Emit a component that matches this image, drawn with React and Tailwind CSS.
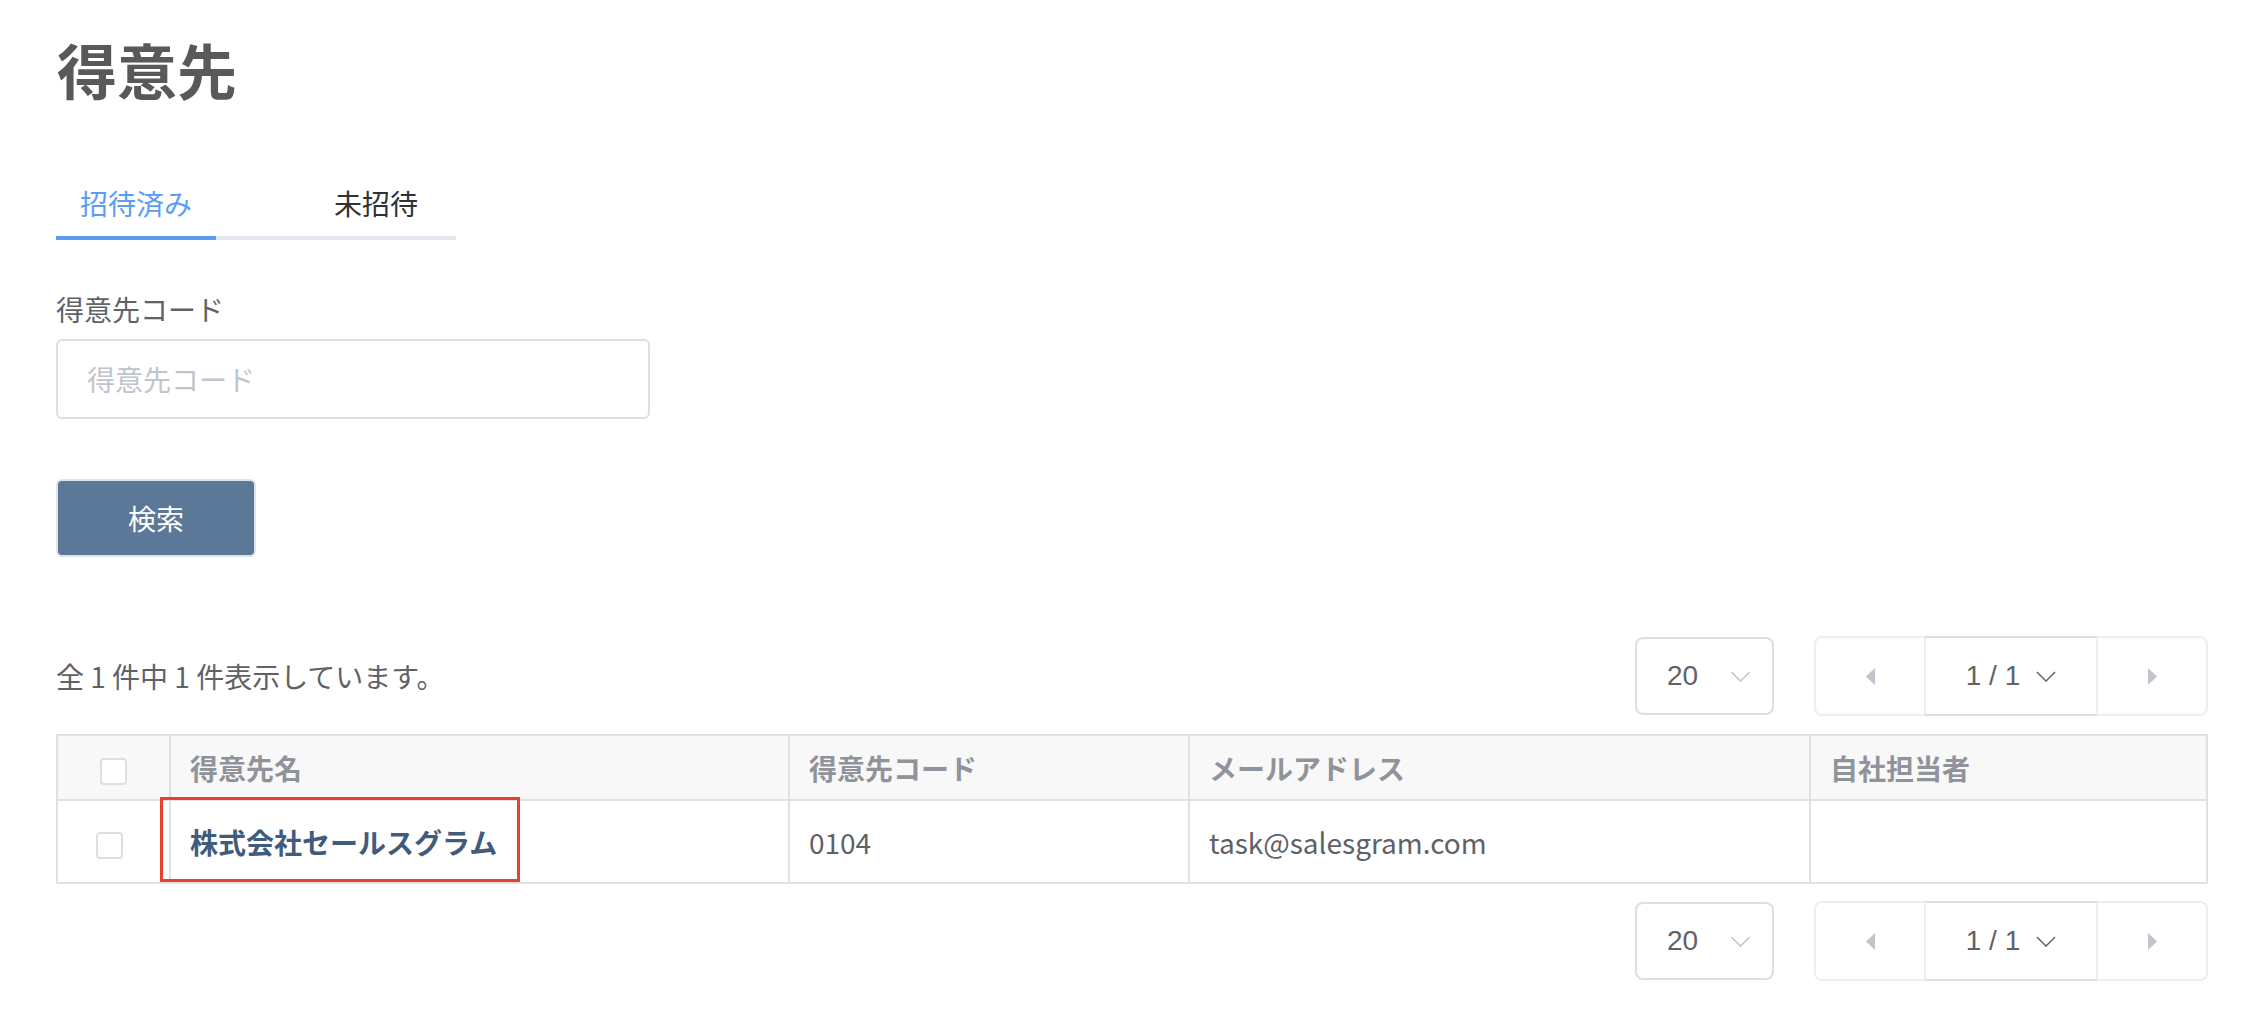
import { useState } from "react";

const jp = { fontFamily: '"Noto Sans CJK JP", "Noto Sans", sans-serif' };

const Chevron = ({ className }) => (
  <svg viewBox="0 0 22 12" className={className} fill="none" stroke="currentColor" strokeWidth="1.6">
    <polyline points="1,1 11,11 21,1" />
  </svg>
);

const Pager = () => (
  <div className="flex items-center gap-[40px]" style={{ fontFamily: '"Liberation Sans", Arial, sans-serif' }}>
    {/* per page */}
    <div className="w-[139px] h-[78px] border-2 border-[#dcdfe6] rounded-lg flex items-center pl-[30px] text-[28px] text-[#606266]">
      <span>20</span>
      <Chevron className="w-[21px] h-[11px] ml-[32px] text-[#c0c4cc]" />
    </div>
    {/* page nav */}
    <div className="flex h-[80px] w-[394px] border-2 border-[#ebeef5] rounded-lg">
      <button className="w-[108px] flex items-center justify-center">
        <svg viewBox="0 0 9 17" className="w-[9px] h-[17px]"><polygon points="9,0 0,8.5 9,17" fill="#c0c4cc" /></svg>
      </button>
      <div className="flex-1 flex items-center justify-center gap-[16px] border-x-2 border-[#ebeef5] border-y-2 border-y-[#dcdfe6] -my-[2px] text-[28px] text-[#606266]">
        <span>1 / 1</span>
        <Chevron className="w-[20px] h-[11px] text-[#606266]" />
      </div>
      <button className="w-[108px] flex items-center justify-center">
        <svg viewBox="0 0 9 17" className="w-[9px] h-[17px]"><polygon points="0,0 9,8.5 0,17" fill="#c0c4cc" /></svg>
      </button>
    </div>
  </div>
);

const Checkbox = ({ className = "" }) => (
  <span className={`inline-block w-[27px] h-[27px] border-2 border-[#dcdfe6] rounded-[4px] bg-white ${className}`} />
);

export default function App() {
  const [tab, setTab] = useState(0);
  const tabs = ["招待済み", "未招待"];

  return (
    <div className="min-h-screen bg-white px-[56px] pb-[40px]" style={jp}>
      {/* Title */}
      <div className="h-[80px] mt-[29px] flex items-center">
        <h1 className="text-[60px] leading-none font-bold text-[#58595b] ml-[1px]">得意先</h1>
      </div>

      {/* Tabs */}
      <div className="mt-[61px] w-[400px] flex border-b-4 border-[#e4e7ed]">
        {tabs.map((t, i) => (
          <button
            key={t}
            onClick={() => setTab(i)}
            className={
              i === 0
                ? `h-[70px] w-[160px] pl-[24px] text-left text-[28px] -mb-[4px] border-b-4 ${tab === i ? "border-[#5b9cf5] text-[#5b9cf5]" : "border-transparent text-[#303133]"}`
                : `h-[70px] pl-[118px] text-left text-[28px] -mb-[4px] border-b-4 ${tab === i ? "border-[#5b9cf5] text-[#5b9cf5]" : "border-transparent text-[#303133]"}`
            }
          >
            {t}
          </button>
        ))}
      </div>

      {/* Search form */}
      <div className="mt-[50px] h-[38px] flex items-center text-[28px] text-[#606266]">得意先コード</div>
      <input
        placeholder="得意先コード"
        className="mt-[11px] block w-[594px] h-[80px] border-2 border-[#dcdfe6] rounded-md pl-[29px] text-[28px] text-[#606266] placeholder:text-[#c0c4cc] outline-none"
      />
      <button className="mt-[60px] w-[200px] h-[78px] rounded-md bg-[#5b7899] border-2 border-[#dfe3ea] text-white text-[28px]">
        検索
      </button>

      {/* Summary + pager */}
      <div className="mt-[79px] h-[80px] flex items-center justify-between">
        <span className="text-[28px] text-[#5f6166]">全 1 件中 1 件表示しています。</span>
        <Pager />
      </div>

      {/* Table */}
      <div className="relative mt-[18px]">
        <table className="w-full table-fixed border-collapse border-2 border-[#e0e0e0] text-[28px]">
          <colgroup>
            <col className="w-[113px]" />
            <col className="w-[619px]" />
            <col className="w-[400px]" />
            <col className="w-[621px]" />
            <col />
          </colgroup>
          <thead>
            <tr className="h-[65px] bg-[#f8f8f9] text-[#909399] font-bold">
              <th className="border-2 border-[#e0e0e0] text-center align-middle"><Checkbox className="align-middle" /></th>
              <th className="border-2 border-[#e0e0e0] text-left pl-[19px]">得意先名</th>
              <th className="border-2 border-[#e0e0e0] text-left pl-[19px]">得意先コード</th>
              <th className="border-2 border-[#e0e0e0] text-left pl-[19px]">メールアドレス</th>
              <th className="border-2 border-[#e0e0e0] text-left pl-[19px]">自社担当者</th>
            </tr>
          </thead>
          <tbody>
            <tr className="h-[83px] text-[#5f6166]">
              <td className="border-2 border-[#e0e0e0] text-center"><Checkbox className="align-middle -ml-[8px]" /></td>
              <td className="border-2 border-[#e0e0e0] pl-[19px] font-bold text-[#3f5b7e]">株式会社セールスグラム</td>
              <td className="border-2 border-[#e0e0e0] pl-[19px]">0104</td>
              <td className="border-2 border-[#e0e0e0] pl-[19px]">task@salesgram.com</td>
              <td className="border-2 border-[#e0e0e0] pl-[19px]"></td>
            </tr>
          </tbody>
        </table>
        {/* annotation box */}
        <div className="absolute left-[104px] top-[63px] w-[360px] h-[85px] border-[3px] border-[#e5432d] pointer-events-none" />
      </div>

      {/* Bottom pager */}
      <div className="mt-[17px] flex justify-end">
        <Pager />
      </div>
    </div>
  );
}
